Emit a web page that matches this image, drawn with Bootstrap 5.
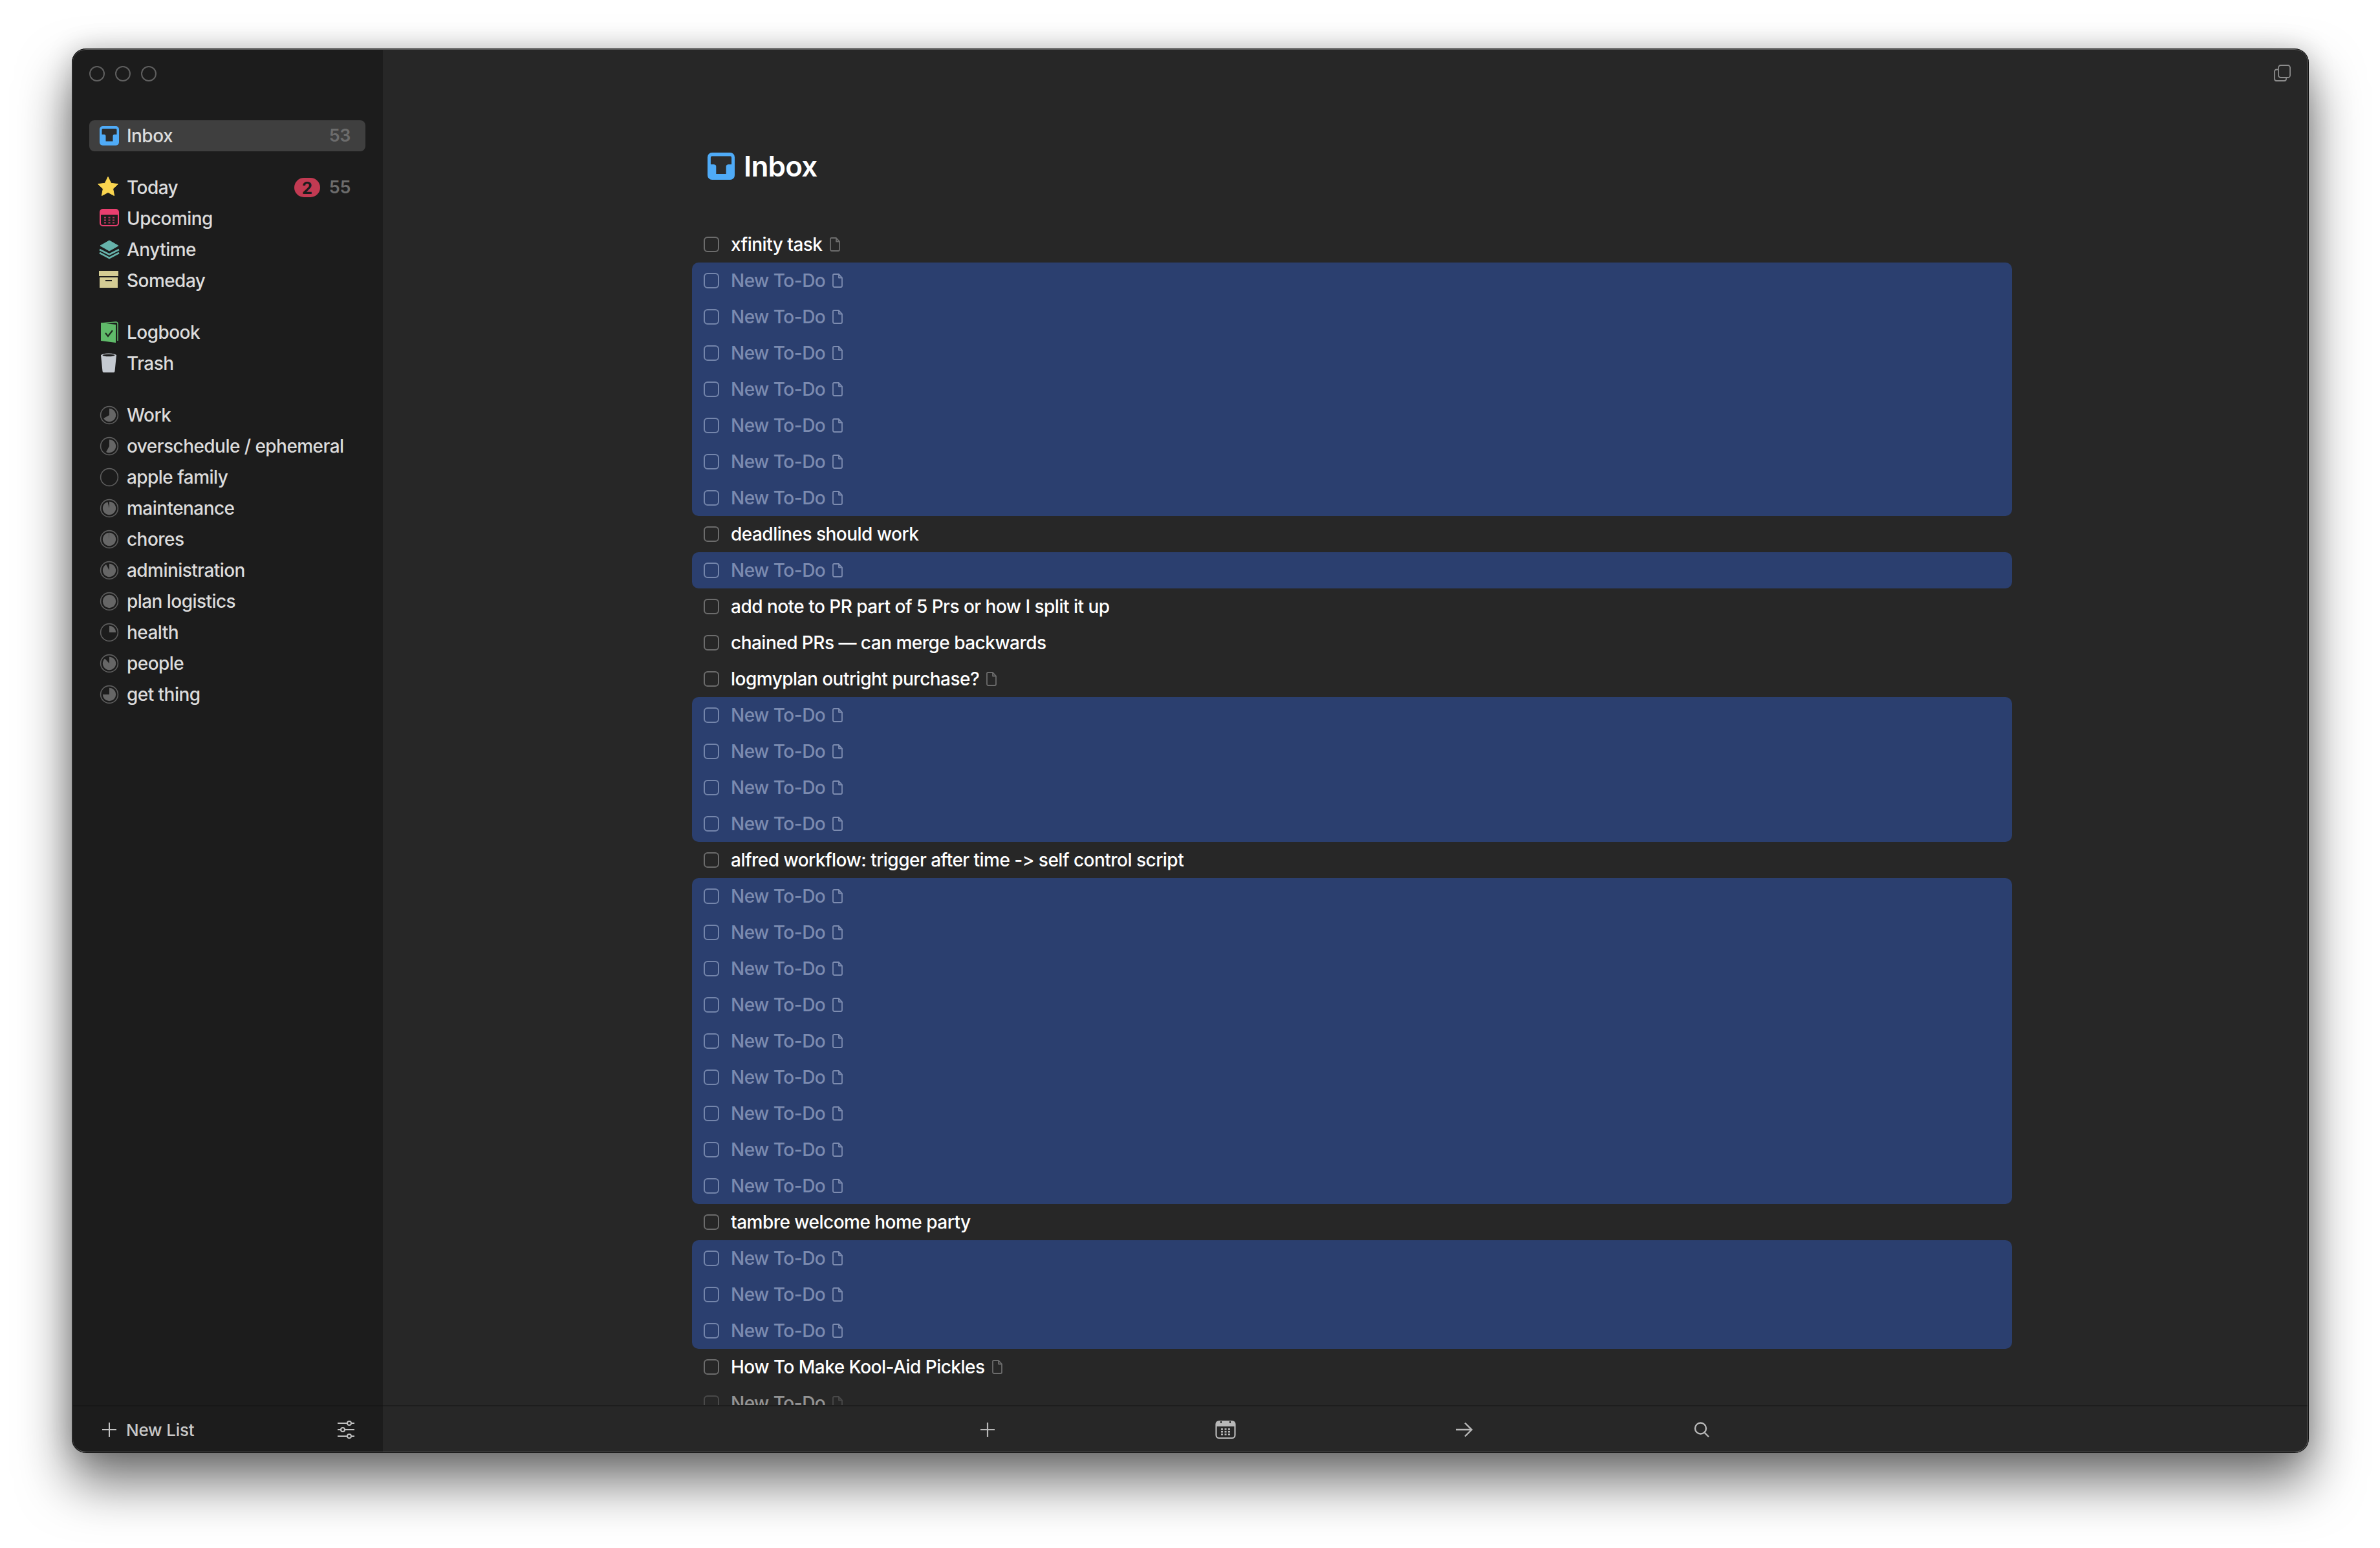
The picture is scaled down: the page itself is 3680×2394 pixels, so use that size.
<!DOCTYPE html>
<html lang="en">
<head>
<meta charset="utf-8">
<title>Inbox</title>
<link rel="stylesheet" href="https://cdn.jsdelivr.net/npm/bootstrap@5.3.0/dist/css/bootstrap.min.css">
<style>
html,body{background:#fff;height:2394px;overflow:hidden}
body{font-family:Inter,"Liberation Sans",sans-serif;font-size:28px;font-weight:500;margin:0}
.app-win{margin:75px 0 0 111px;width:3459px;height:2172px;border-radius:22px;overflow:hidden;background:#272727;box-shadow:0 44px 80px 2px rgba(0,0,0,.55),0 0 40px rgba(0,0,0,.18)}
.app-win::after{content:"";position:absolute;inset:0;border-radius:22px;pointer-events:none;box-shadow:inset 0 0 0 1px #0d0d0d,inset 0 2px 0 #5a5a5a,inset 0 -2px 0 #666,inset 2px 0 0 #3a3a3a,inset -2px 0 0 #666}
.side-pane{width:481px;background:#1c1c1c;flex:none;color:#dcdcdc}
.light-row{height:80px;padding:27px 0 0 27px;gap:16px}
.light-dot{width:24px;height:24px;border:2px solid #5f5f5f;border-radius:50%}
.side-body{padding:31px 27px 0;gap:32px}
.side-row{height:48px;padding:0 23px 0 16px;border-radius:8px;letter-spacing:-.55px;white-space:nowrap}
.side-row.is-on{background:#3f3f3f}
.side-ico{width:30px;height:30px;margin-right:12px;flex:none;display:block;overflow:visible}
.side-num{color:#6c6c6c;font-weight:600;margin-left:auto;font-size:27px;letter-spacing:-.4px}
.due-pill{background:#c23a52;color:#1c1c1c;width:40px;height:30px;border-radius:15px;font-size:26px;font-weight:700;margin-right:14px;margin-left:auto;letter-spacing:0}
.due-pill + .side-num{margin-left:0}
.side-foot{height:74px;border-top:2px solid #171717;padding:0 41px 0 46px;font-size:26px;color:#c8c8c8;letter-spacing:-.2px}
.foot-plus{width:24px;height:24px;margin-right:14px;flex:none}
.top-strip{padding:25px 28px 0 0;height:80px}
.copy-ico{width:26px;height:26px}
.list-pane{min-height:0}
.head-line{margin:81px 0 0 502px;height:42px;gap:14px;font-size:44px;font-weight:600;color:#fff;letter-spacing:-.8px;line-height:42px}
.head-ico{width:42px;height:42px;display:block}
.todo-list{margin:72px 0 0 478px;width:2041px}
.sel-wrap{background:#2b3f6f;border-radius:10px}
.todo-row{height:56px;padding-left:18px;color:#fff;letter-spacing:-.52px;white-space:nowrap}
.sel-wrap .todo-row{color:#7c8bb0}
.tick-box{width:24px;height:24px;border:2px solid #6c6c6c;border-radius:6px;margin-right:18px;flex:none}
.sel-wrap .tick-box{border-color:#7485ab}
.note-ico{width:16px;height:22px;margin-left:11px;display:block;stroke:#6c6c6c}
.sel-wrap .note-ico{stroke:#7d8cb0}
.tool-strip{height:74px;border-top:2px solid #1d1d1d;background:#272727;padding-left:751px;flex:none;position:relative}
.tool-cell{width:368px}
.tool-ico{width:32px;height:32px;display:block}
</style>
</head>
<body>
<svg width="0" height="0" class="position-absolute">
  <symbol id="doc" viewBox="0 0 16 22"><path d="M2.5 1H10L15 6.500V19A2 2 0 0 1 13 21H3A2 2 0 0 1 1 19V2.500A1.500 1.500 0 0 1 2.500 1ZM10 1V6.500H15" fill="none" stroke-width="1.800" stroke-linejoin="round"/></symbol>
  <symbol id="tray" viewBox="0 0 30 30"><rect width="30" height="30" rx="5" fill="#4fabf7"/><path d="M5 4H25A1.500 1.500 0 0 1 26.500 5.500V13H23A2.500 2.500 0 0 0 20.500 15.500V23.500H9.500V15.500A2.500 2.500 0 0 0 7 13H3.500V5.500A1.500 1.500 0 0 1 5 4Z" fill="#2c2c2c"/></symbol>
</svg>
<div class="app-win position-relative d-flex">
  <aside class="side-pane d-flex flex-column">
    <div class="light-row d-flex"><span class="light-dot"></span><span class="light-dot"></span><span class="light-dot"></span></div>
    <div class="side-body d-flex flex-column flex-grow-1">
      <div class="side-row is-on d-flex align-items-center"><svg class="side-ico"><use href="#tray"/></svg>Inbox<span class="side-num">53</span></div>
      <div>
        <div class="side-row d-flex align-items-center"><svg class="side-ico" viewBox="0 0 30 30"><path d="M13 -1.500l4.700 9.800 10.700 1.400-7.800 7.300 2 10.600L13 22.400 3.400 27.600l2-10.600L-2.400 9.700l10.700-1.400Z" fill="#fad54f" stroke="#fad54f" stroke-linejoin="round"/></svg>Today<span class="due-pill d-flex align-items-center justify-content-center">2</span><span class="side-num">55</span></div>
        <div class="side-row d-flex align-items-center"><svg class="side-ico" viewBox="0 0 30 30"><rect x="1" y="1" width="28" height="25" rx="4" fill="none" stroke="#ea3f6f" stroke-width="2"/><path d="M1 5a4 4 0 0 1 4-4h20a4 4 0 0 1 4 4v4H1Z" fill="#ea3f6f"/><path d="M7 12.500h3v2H7zM13.500 12.500h3v2h-3zM20 12.500h3v2h-3zM7 16.500h3v2H7zM13.500 16.500h3v2h-3zM20 16.500h3v2h-3zM7 20.500h3v2H7zM13.500 20.500h3v2h-3zM20 20.500h3v2h-3z" fill="#b9365c"/></svg>Upcoming</div>
        <div class="side-row d-flex align-items-center"><svg class="side-ico" viewBox="0 0 30 30"><path d="M15 1L29 9 15 17 1 9Z" fill="#66b3ab" stroke="#66b3ab" stroke-linejoin="round"/><path d="M0 15l15 7.500 15-7.500M0 20l15 8 15-8" fill="none" stroke="#66b3ab" stroke-width="2.600"/></svg>Anytime</div>
        <div class="side-row d-flex align-items-center"><svg class="side-ico" viewBox="0 0 30 30"><path d="M-1 0h30v8H-1Z" fill="#d4cc94"/><path d="M0 10h28v16H0Zm9 4v2h10v-2Z" fill="#d4cc94" fill-rule="evenodd"/></svg>Someday</div>
      </div>
      <div>
        <div class="side-row d-flex align-items-center"><svg class="side-ico" viewBox="0 0 30 30"><path d="M3 1L25 -1Q28 -1 28 2V28" fill="none" stroke="#60bb6a" stroke-width="1.500"/><path d="M2 0L25 3V31L2 28Z" fill="#60bb6a"/><path d="M9 16l4 5 7-9" fill="none" stroke="#1f2a1f" stroke-width="2.200"/></svg>Logbook</div>
        <div class="side-row d-flex align-items-center"><svg class="side-ico" viewBox="0 0 30 30"><path d="M2 2H26L23.500 27A2 2 0 0 1 21.500 29H6.500A2 2 0 0 1 4.500 27Z" fill="#c5cad1"/><ellipse cx="14" cy="2.500" rx="12" ry="3" fill="#c5cad1"/><ellipse cx="14" cy="2.500" rx="9.500" ry="1.700" fill="#1c1c1c"/></svg>Trash</div>
      </div>
      <div>
        <div class="side-row d-flex align-items-center"><svg class="side-ico" viewBox="0 0 28 28"><circle cx="14" cy="14" r="12.500" fill="none" stroke="#5e5e5e" stroke-width="1.500"/><path d="M14 14V4.500A9.500 9.500 0 1 1 5.680 18.580Z" fill="#666"/></svg>Work</div>
        <div class="side-row d-flex align-items-center"><svg class="side-ico" viewBox="0 0 28 28"><circle cx="14" cy="14" r="12.500" fill="none" stroke="#5e5e5e" stroke-width="1.500"/><path d="M14 14V4.500A9.500 9.500 0 1 1 9.420 22.320Z" fill="#666"/></svg>overschedule / ephemeral</div>
        <div class="side-row d-flex align-items-center"><svg class="side-ico" viewBox="0 0 28 28"><circle cx="14" cy="14" r="12.500" fill="none" stroke="#5e5e5e" stroke-width="1.500"/></svg>apple family</div>
        <div class="side-row d-flex align-items-center"><svg class="side-ico" viewBox="0 0 28 28"><circle cx="14" cy="14" r="12.500" fill="none" stroke="#5e5e5e" stroke-width="1.500"/><path d="M14 14V4.500A9.500 9.500 0 1 1 11.640 4.790Z" fill="#666"/></svg>maintenance</div>
        <div class="side-row d-flex align-items-center"><svg class="side-ico" viewBox="0 0 28 28"><circle cx="14" cy="14" r="12.500" fill="none" stroke="#5e5e5e" stroke-width="1.500"/><path d="M14 14V4.500A9.500 9.500 0 1 1 13.400 4.520Z" fill="#666"/></svg>chores</div>
        <div class="side-row d-flex align-items-center"><svg class="side-ico" viewBox="0 0 28 28"><circle cx="14" cy="14" r="12.500" fill="none" stroke="#5e5e5e" stroke-width="1.500"/><path d="M14 14V4.500A9.500 9.500 0 1 1 9.420 5.680Z" fill="#666"/></svg>administration</div>
        <div class="side-row d-flex align-items-center"><svg class="side-ico" viewBox="0 0 28 28"><circle cx="14" cy="14" r="12.500" fill="none" stroke="#5e5e5e" stroke-width="1.500"/><circle cx="14" cy="14" r="9.500" fill="#666"/></svg>plan logistics</div>
        <div class="side-row d-flex align-items-center"><svg class="side-ico" viewBox="0 0 28 28"><circle cx="14" cy="14" r="12.500" fill="none" stroke="#5e5e5e" stroke-width="1.500"/><path d="M14 14V4.500A9.500 9.500 0 0 1 23.500 14Z" fill="#666"/></svg>health</div>
        <div class="side-row d-flex align-items-center"><svg class="side-ico" viewBox="0 0 28 28"><circle cx="14" cy="14" r="12.500" fill="none" stroke="#5e5e5e" stroke-width="1.500"/><path d="M14 14V4.500A9.500 9.500 0 1 1 7.500 7.080Z" fill="#666"/></svg>people</div>
        <div class="side-row d-flex align-items-center"><svg class="side-ico" viewBox="0 0 28 28"><circle cx="14" cy="14" r="12.500" fill="none" stroke="#5e5e5e" stroke-width="1.500"/><path d="M14 14V4.500A9.500 9.500 0 1 1 4.500 14Z" fill="#666"/></svg>get thing</div>
      </div>
    </div>
    <div class="side-foot d-flex align-items-center">
      <svg class="foot-plus" viewBox="0 0 24 24"><path d="M12 1V23M1 12H23" stroke="#c4c4c4" stroke-width="2"/></svg>New List
      <svg class="ms-auto tool-ico" viewBox="0 0 32 32"><g fill="none" stroke="#c0c0c0" stroke-width="2"><path d="M3 6H18M24 6H29M3 16H8M14 16H29M3 26H18M24 26H29"/><circle cx="21" cy="6" r="3"/><circle cx="11" cy="16" r="3"/><circle cx="21" cy="26" r="3"/></g></svg>
    </div>
  </aside>
  <main class="d-flex flex-column flex-grow-1 overflow-hidden">
    <div class="list-pane flex-grow-1 overflow-hidden">
      <div class="top-strip d-flex justify-content-end">
        <svg class="copy-ico" viewBox="0 0 26 26"><g fill="none" stroke="#8c8c8c" stroke-width="1.800"><path d="M6 7.500H4A3 3 0 0 0 1 10.500V22A3 3 0 0 0 4 25H16A3 3 0 0 0 19 22V20"/><rect x="7" y="1" width="18" height="19" rx="3.500"/></g></svg>
      </div>
      <div class="head-line d-flex align-items-center"><svg class="head-ico"><use href="#tray" width="42" height="42"/></svg>Inbox</div>
      <div class="todo-list">
        <div class="todo-row d-flex align-items-center"><span class="tick-box"></span>xfinity task<svg class="note-ico"><use href="#doc"/></svg></div>
        <div class="sel-wrap">
          <div class="todo-row d-flex align-items-center"><span class="tick-box"></span>New To-Do<svg class="note-ico"><use href="#doc"/></svg></div>
          <div class="todo-row d-flex align-items-center"><span class="tick-box"></span>New To-Do<svg class="note-ico"><use href="#doc"/></svg></div>
          <div class="todo-row d-flex align-items-center"><span class="tick-box"></span>New To-Do<svg class="note-ico"><use href="#doc"/></svg></div>
          <div class="todo-row d-flex align-items-center"><span class="tick-box"></span>New To-Do<svg class="note-ico"><use href="#doc"/></svg></div>
          <div class="todo-row d-flex align-items-center"><span class="tick-box"></span>New To-Do<svg class="note-ico"><use href="#doc"/></svg></div>
          <div class="todo-row d-flex align-items-center"><span class="tick-box"></span>New To-Do<svg class="note-ico"><use href="#doc"/></svg></div>
          <div class="todo-row d-flex align-items-center"><span class="tick-box"></span>New To-Do<svg class="note-ico"><use href="#doc"/></svg></div>
        </div>
        <div class="todo-row d-flex align-items-center"><span class="tick-box"></span>deadlines should work</div>
        <div class="sel-wrap">
          <div class="todo-row d-flex align-items-center"><span class="tick-box"></span>New To-Do<svg class="note-ico"><use href="#doc"/></svg></div>
        </div>
        <div class="todo-row d-flex align-items-center"><span class="tick-box"></span>add note to PR part of 5 Prs or how I split it up</div>
        <div class="todo-row d-flex align-items-center"><span class="tick-box"></span>chained PRs — can merge backwards</div>
        <div class="todo-row d-flex align-items-center"><span class="tick-box"></span>logmyplan outright purchase?<svg class="note-ico"><use href="#doc"/></svg></div>
        <div class="sel-wrap">
          <div class="todo-row d-flex align-items-center"><span class="tick-box"></span>New To-Do<svg class="note-ico"><use href="#doc"/></svg></div>
          <div class="todo-row d-flex align-items-center"><span class="tick-box"></span>New To-Do<svg class="note-ico"><use href="#doc"/></svg></div>
          <div class="todo-row d-flex align-items-center"><span class="tick-box"></span>New To-Do<svg class="note-ico"><use href="#doc"/></svg></div>
          <div class="todo-row d-flex align-items-center"><span class="tick-box"></span>New To-Do<svg class="note-ico"><use href="#doc"/></svg></div>
        </div>
        <div class="todo-row d-flex align-items-center"><span class="tick-box"></span>alfred workflow: trigger after time -&gt; self control script</div>
        <div class="sel-wrap">
          <div class="todo-row d-flex align-items-center"><span class="tick-box"></span>New To-Do<svg class="note-ico"><use href="#doc"/></svg></div>
          <div class="todo-row d-flex align-items-center"><span class="tick-box"></span>New To-Do<svg class="note-ico"><use href="#doc"/></svg></div>
          <div class="todo-row d-flex align-items-center"><span class="tick-box"></span>New To-Do<svg class="note-ico"><use href="#doc"/></svg></div>
          <div class="todo-row d-flex align-items-center"><span class="tick-box"></span>New To-Do<svg class="note-ico"><use href="#doc"/></svg></div>
          <div class="todo-row d-flex align-items-center"><span class="tick-box"></span>New To-Do<svg class="note-ico"><use href="#doc"/></svg></div>
          <div class="todo-row d-flex align-items-center"><span class="tick-box"></span>New To-Do<svg class="note-ico"><use href="#doc"/></svg></div>
          <div class="todo-row d-flex align-items-center"><span class="tick-box"></span>New To-Do<svg class="note-ico"><use href="#doc"/></svg></div>
          <div class="todo-row d-flex align-items-center"><span class="tick-box"></span>New To-Do<svg class="note-ico"><use href="#doc"/></svg></div>
          <div class="todo-row d-flex align-items-center"><span class="tick-box"></span>New To-Do<svg class="note-ico"><use href="#doc"/></svg></div>
        </div>
        <div class="todo-row d-flex align-items-center"><span class="tick-box"></span>tambre welcome home party</div>
        <div class="sel-wrap">
          <div class="todo-row d-flex align-items-center"><span class="tick-box"></span>New To-Do<svg class="note-ico"><use href="#doc"/></svg></div>
          <div class="todo-row d-flex align-items-center"><span class="tick-box"></span>New To-Do<svg class="note-ico"><use href="#doc"/></svg></div>
          <div class="todo-row d-flex align-items-center"><span class="tick-box"></span>New To-Do<svg class="note-ico"><use href="#doc"/></svg></div>
        </div>
        <div class="todo-row d-flex align-items-center"><span class="tick-box"></span>How To Make Kool-Aid Pickles<svg class="note-ico"><use href="#doc"/></svg></div>
        <div class="todo-row d-flex align-items-center opacity-50"><span class="tick-box"></span>New To-Do<svg class="note-ico"><use href="#doc"/></svg></div>
      </div>
    </div>
    <div class="tool-strip d-flex align-items-center">
      <div class="tool-cell d-flex justify-content-center"><svg class="tool-ico" viewBox="0 0 32 32"><path d="M16 5V27M5 16H27" stroke="#b8b8b8" stroke-width="2.200"/></svg></div>
      <div class="tool-cell d-flex justify-content-center"><svg class="tool-ico" viewBox="0 0 32 32"><rect x="1.500" y="3" width="29" height="26" rx="4.500" fill="none" stroke="#b8b8b8" stroke-width="2.200"/><path d="M1.500 7.500A4.500 4.500 0 0 1 6 3H26A4.500 4.500 0 0 1 30.500 7.500V11H1.500Z" fill="#b8b8b8"/><path d="M9 3v3M23 3v3" stroke="#272727" stroke-width="2"/><path d="M9 14h3v2.500H9zM14.500 14h3v2.500h-3zM20 14h3v2.500h-3zM9 18h3v2.500H9zM14.500 18h3v2.500h-3zM20 18h3v2.500h-3zM9 22h3v2.500H9zM14.500 22h3v2.500h-3zM20 22h3v2.500h-3z" fill="#b8b8b8"/></svg></div>
      <div class="tool-cell d-flex justify-content-center"><svg class="tool-ico" viewBox="0 0 32 32"><path d="M4 16H28M18 5.500L28.500 16 18 26.500" fill="none" stroke="#b8b8b8" stroke-width="2.400"/></svg></div>
      <div class="tool-cell d-flex justify-content-center"><svg class="tool-ico" viewBox="0 0 32 32"><circle cx="14.500" cy="14" r="8.500" fill="none" stroke="#b8b8b8" stroke-width="2.400"/><path d="M20.500 20.500L27 27" stroke="#b8b8b8" stroke-width="2.400"/></svg></div>
    </div>
  </main>
</div>
<script src="https://cdn.jsdelivr.net/npm/bootstrap@5.3.0/dist/js/bootstrap.bundle.min.js"></script>
</body>
</html>
